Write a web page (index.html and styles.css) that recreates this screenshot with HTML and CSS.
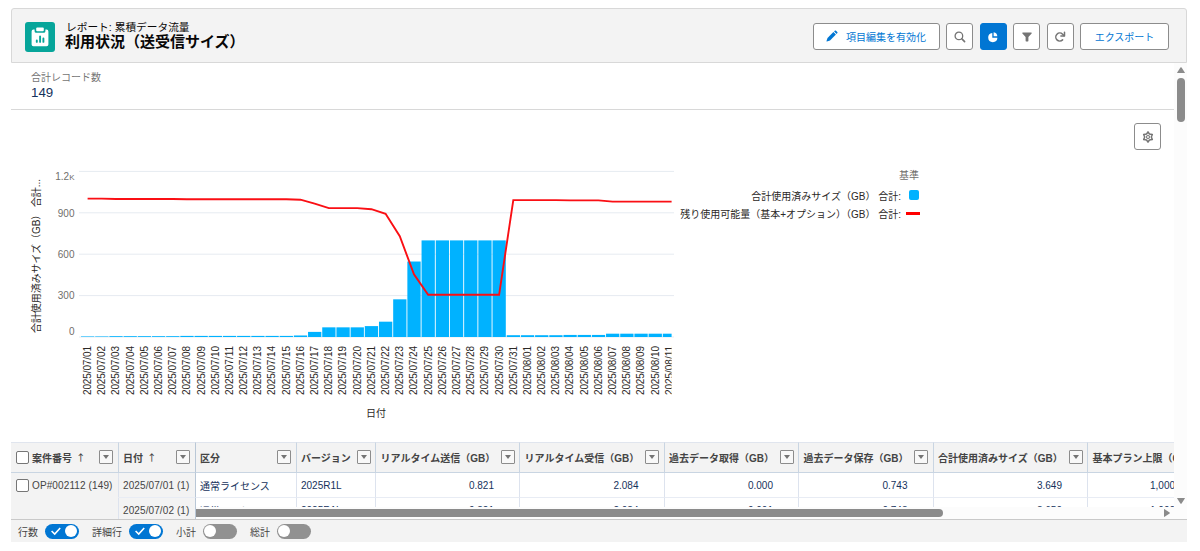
FILE: index.html
```html
<!DOCTYPE html>
<html lang="ja">
<head>
    <meta charset="UTF-8">
    <meta name="viewport" content="width=device-width, initial-scale=1.0">
    <title>利用状況（送受信サイズ）</title>
    <link rel="stylesheet" href="styles.css">
</head>
<body>
    <div class="report">
        <header class="report-header">
            <div class="report-icon">
                <svg width="30" height="30" viewBox="0 0 30 30">
                    <path fill="#fff" d="M8.4 7.6H9.6V9.2Q9.6 10.8 11.2 10.8H18.8Q20.4 10.8 20.4 9.2V7.6H21.6Q23.4 7.6 23.4 9.4V22.4Q23.4 24.2 21.6 24.2H8.4Q6.6 24.2 6.6 22.4V9.4Q6.6 7.6 8.4 7.6Z"/>
                    <path fill="#fff" d="M12.2 5.6H17.8Q18.8 5.6 18.8 6.6V8.2Q18.8 9.2 17.8 9.2H12.2Q11.2 9.2 11.2 8.2V6.6Q11.2 5.6 12.2 5.6Z"/>
                    <path stroke="#06a59a" stroke-width="1.9" stroke-linecap="round" d="M11.8 18.4V19.9M15.1 14.4V19.9M18.4 16.4V19.9"/>
                </svg>
            </div>
            <div class="report-title">
                <p>レポート: 累積データ流量</p>
                <h1>利用状況（送受信サイズ）</h1>
            </div>
            <div class="actions">
                <button class="btn btn-edit">
                    <svg width="12" height="12" viewBox="0 0 12 12" fill="#0176d3">
                        <path d="M1.5 8L7.4 2.1L9.9 4.6L4 10.5L.9 11.4Q.4 11.5.5 11Z"/>
                        <path d="M8.1 1.4L9 .6Q9.5.2 10 .7L11.3 2Q11.8 2.5 11.4 3L10.6 3.9Z"/>
                    </svg>
                    項目編集を有効化
                </button>
                <button class="btn btn-icon">
                    <svg width="12" height="12" viewBox="0 0 12 12" fill="none" stroke="#747474">
                        <circle cx="4.9" cy="4.9" r="3.8" stroke-width="1.3"/>
                        <path stroke-width="1.6" stroke-linecap="round" d="M7.9 7.9L10.6 10.6"/>
                    </svg>
                </button>
                <button class="btn btn-icon active">
                    <svg width="12" height="12" viewBox="0 0 12 12" fill="#fff">
                        <path d="M5.3 2V6.8H10.4A4.6 4.6 0 1 1 5.3 2Z"/>
                        <path d="M6.6 1.3A4.2 4.2 0 0 1 10.3 5.3H6.6Z"/>
                    </svg>
                </button>
                <button class="btn btn-icon">
                    <svg width="12" height="12" viewBox="0 0 12 12" fill="#747474">
                        <path d="M1.7 1.4H10.3Q11.2 1.6 10.6 2.5L7.4 6V9.8Q7.4 10.4 6.8 10.4H5.2Q4.6 10.4 4.6 9.8V6L1.4 2.5Q.8 1.6 1.7 1.4Z"/>
                    </svg>
                </button>
                <button class="btn btn-icon">
                    <svg width="12" height="12" viewBox="0 0 12 12" fill="none" stroke="#747474">
                        <path stroke-width="1.5" stroke-linecap="round" d="M8.6 8.9A4 4 0 1 1 8.6 3.2L10 4.6"/>
                        <path stroke-width="1.5" stroke-linecap="round" stroke-linejoin="round" d="M10.5 1.3V4.9H6.9"/>
                    </svg>
                </button>
                <button class="btn btn-export">エクスポート</button>
            </div>
        </header>

        <main class="report-body">
            <div class="content">
                <section class="summary">
                    <p class="summary-label">合計レコード数</p>
                    <p class="summary-value">149</p>
                </section>

                <section class="chart-area">
                    <svg id="chart" class="chart" width="670" height="332" viewBox="11 110 670 332">
                        <defs>
                            <clipPath id="plot-clip">
                                <rect x="80" y="165" width="591.6" height="240"/>
                            </clipPath>
                        </defs>
                        <g id="grid"></g>
                        <g clip-path="url(#plot-clip)">
                            <g id="bars"></g>
                            <polyline id="line" class="line"/>
                            <g id="dates"></g>
                        </g>
                        <text class="axis-title" transform="translate(40 333) rotate(-90)" textLength="154">合計使用済みサイズ（GB） 合計...</text>
                        <text class="axis-title" x="366" y="416.5">日付</text>
                    </svg>
                    <div class="legend">
                        <p class="legend-title">基準</p>
                        <p>合計使用済みサイズ（GB） 合計:<span class="key"><i class="key-bar"></i></span></p>
                        <p>残り使用可能量（基本+オプション）（GB） 合計:<span class="key"><i class="key-line"></i></span></p>
                    </div>
                    <button class="btn btn-icon btn-gear">
                        <svg width="12" height="12" viewBox="0 0 12 12" fill="none" stroke="#747474">
                            <path stroke-width="1.5" stroke-linejoin="round" d="M6 .9L7.4 3L10.3 3.4L9.3 6L10.3 8.6L7.4 9L6 11.1L4.6 9L1.7 8.6L2.7 6L1.7 3.4L4.6 3Z"/>
                            <circle cx="6" cy="6" r="1.5" stroke-width="1.1"/>
                        </svg>
                    </button>
                </section>

                <section class="table-area">
                    <div class="row head">
                        <div class="cell frozen"><span class="check"></span>案件番号<span class="sort">↑</span><span class="menu"></span></div>
                        <div class="cell frozen edge">日付<span class="sort">↑</span><span class="menu"></span></div>
                        <div class="cell">区分<span class="menu"></span></div>
                        <div class="cell">バージョン<span class="menu"></span></div>
                        <div class="cell">リアルタイム送信（GB）<span class="menu"></span></div>
                        <div class="cell">リアルタイム受信（GB）<span class="menu"></span></div>
                        <div class="cell">過去データ取得（GB）<span class="menu"></span></div>
                        <div class="cell">過去データ保存（GB）<span class="menu"></span></div>
                        <div class="cell">合計使用済みサイズ（GB）<span class="menu"></span></div>
                        <div class="cell">基本プラン上限（GB）<span class="menu"></span></div>
                    </div>
                    <div class="row">
                        <div class="cell frozen group"><span class="check"></span>OP#002112 (149)</div>
                        <div class="cell frozen edge date">2025/07/01 (1)</div>
                        <div class="cell">通常ライセンス</div>
                        <div class="cell">2025R1L</div>
                        <div class="cell num">0.821</div>
                        <div class="cell num">2.084</div>
                        <div class="cell num">0.000</div>
                        <div class="cell num">0.743</div>
                        <div class="cell num">3.649</div>
                        <div class="cell num">1,000.000</div>
                    </div>
                    <div class="row last">
                        <div class="cell frozen group"></div>
                        <div class="cell frozen edge date">2025/07/02 (1)</div>
                        <div class="scroll-pane">
                            <div class="cell">通常ライセンス</div>
                            <div class="cell">2025R1L</div>
                            <div class="cell num">0.821</div>
                            <div class="cell num">2.084</div>
                            <div class="cell num">0.001</div>
                            <div class="cell num">0.743</div>
                            <div class="cell num">3.650</div>
                            <div class="cell num">1,000.000</div>
                        </div>
                        <div class="hscroll">
                            <div class="hthumb"></div>
                            <svg width="6" height="8" viewBox="0 0 6 8"><path fill="#8b8b8b" d="M0 .3Q0-.2.6.2L5.6 3.4Q6.2 4 5.6 4.6L.6 7.8Q0 8.2 0 7.6Z"/></svg>
                        </div>
                    </div>
                </section>
            </div>
            <div class="vscroll">
                <svg width="8" height="6" viewBox="0 0 8 6"><path fill="#8b8b8b" d="M.4 6Q-.2 6 .2 5.4L3.4.5Q4 0 4.6.5L7.8 5.4Q8.2 6 7.6 6Z"/></svg>
                <div class="vthumb"></div>
                <svg class="down" width="8" height="6" viewBox="0 0 8 6"><path fill="#8b8b8b" d="M.4 0Q-.2 0 .2.6L3.4 5.5Q4 6 4.6 5.5L7.8.6Q8.2 0 7.6 0Z"/></svg>
            </div>
        </main>

        <footer class="report-footer">
            <div class="option">行数<span class="toggle on"><svg width="12" height="10" viewBox="0 0 12 10"><path d="M1.6 5L4.7 8L10.2 2"/></svg><i></i></span></div>
            <div class="option">詳細行<span class="toggle on"><svg width="12" height="10" viewBox="0 0 12 10"><path d="M1.6 5L4.7 8L10.2 2"/></svg><i></i></span></div>
            <div class="option">小計<span class="toggle"><i></i></span></div>
            <div class="option">総計<span class="toggle"><i></i></span></div>
        </footer>
    </div>

    <script>
        const NS = 'http://www.w3.org/2000/svg';

        // 合計使用済みサイズ（GB）: 2025/07/01 から
        const used = [4, 4, 6, 6, 6, 6, 6, 8, 8, 8, 8, 8, 8, 8, 8, 11, 37, 70, 70, 70, 79, 111, 273, 547,
            700, 700, 700, 700, 700, 700, 13, 13, 13, 13, 15, 15, 15, 24, 24, 24, 24, 24];
        // 残り使用可能量（GB）
        const left = [1003, 1003, 1000, 1000, 1000, 1000, 1000, 998, 998, 998, 998, 998, 998, 998, 998, 995, 967, 934, 934, 934, 926, 893, 730, 455,
            306, 306, 306, 306, 306, 306, 992, 992, 992, 992, 990, 990, 990, 981, 981, 981, 981, 981];

        const baseY = 337;
        const scale = 0.138;
        const startX = 81;
        const step = 14.19;

        function add(parent, name, attrs, text) {
            const el = document.createElementNS(NS, name);
            for (const key in attrs) {
                el.setAttribute(key, attrs[key]);
            }
            if (text) {
                el.textContent = text;
            }
            document.getElementById(parent).appendChild(el);
            return el;
        }

        // 目盛り
        const ticks = [[0, 335], [300, 299], [600, 257.5], [900, 216.5], [1200, 179.5]];
        ticks.forEach(([value, y]) => {
            const lineY = baseY - value * scale;
            add('grid', 'line', { class: 'grid-line', x1: 79, x2: 674, y1: lineY, y2: lineY });
            const label = add('grid', 'text', { class: 'tick', x: 74.5, y: y }, value === 1200 ? '1.2' : String(value));
            if (value === 1200) {
                const unit = document.createElementNS(NS, 'tspan');
                unit.setAttribute('class', 'unit');
                unit.textContent = 'K';
                label.appendChild(unit);
            }
        });

        // 棒と日付
        const points = [];
        used.forEach((value, i) => {
            const x = startX + i * step;
            const date = new Date(Date.UTC(2025, 6, 1 + i)).toISOString().slice(0, 10).replace(/-/g, '/');
            add('bars', 'rect', { class: 'bar', x: x, y: baseY - value * scale, width: step - 0.9, height: value * scale });
            add('dates', 'text', { class: 'date-label', transform: `translate(${x + 10} 395) rotate(-90)`, textLength: 49 }, date);
            points.push(`${x + 6.6},${baseY - left[i] * scale}`);
        });
        // 線は枠の右端まで伸ばす
        points.push(`674,${baseY - left[left.length - 1] * scale}`);
        document.getElementById('line').setAttribute('points', points.join(' '));
    </script>
</body>
</html>
```
FILE: styles.css
```css
* {
    box-sizing: border-box;
    margin: 0;
    padding: 0;
}

body {
    background: #fff;
    color: #3e3e3c;
    font-family: 'Liberation Sans', 'Noto Sans CJK JP', sans-serif;
    font-size: 10px;
    overflow: hidden;
}

.report {
    width: 1176px;
    height: 534px;
    margin: 8px 0 0 11px;
    display: flex;
    flex-direction: column;
}

/* --- Header --- */
.report-header {
    height: 55px;
    flex: none;
    display: flex;
    align-items: center;
    padding: 2px 17px 0 13px;
    background: #f3f3f3;
    border: 1px solid #d8d8d8;
    border-radius: 3px 3px 0 0;
}

.report-icon {
    width: 30px;
    height: 30px;
    border-radius: 3px;
    background: #06a59a;
}

.report-title {
    margin-left: 10px;
    padding-bottom: 4px;
    color: #080707;
}

.report-title p {
    font-size: 10.7px;
    line-height: 14px;
    padding-left: 1px;
}

.report-title h1 {
    font-size: 15px;
    line-height: 15px;
    font-weight: 700;
}

.actions {
    margin-left: auto;
    display: flex;
    gap: 6.5px;
}

.btn {
    height: 27px;
    display: flex;
    align-items: center;
    justify-content: center;
    background: #fff;
    border: 1px solid #8c8c8c;
    border-radius: 3px;
    color: #0176d3;
    font: inherit;
    cursor: pointer;
}

.btn-edit {
    width: 127px;
    gap: 8px;
    padding-bottom: 1px;
}

.btn-icon {
    width: 27px;
}

.btn-icon.active {
    background: #0176d3;
    border-color: #0176d3;
}

.btn-export {
    width: 89px;
    padding-bottom: 1px;
}

/* --- Body --- */
.report-body {
    flex: 1;
    min-height: 0;
    display: flex;
}

.content {
    width: 1163px;
    overflow: hidden;
}

.summary {
    height: 47px;
    padding: 8px 0 0 20px;
    border-bottom: 1px solid #d8d8d8;
}

.summary-label {
    line-height: 14px;
    color: #747474;
}

.summary-value {
    font-size: 13.3px;
    line-height: 16px;
    color: #16325c;
}

.chart-area {
    height: 332px;
    display: flex;
    align-items: flex-start;
}

.chart {
    flex: none;
    display: block;
    margin-right: -14px;
}

.grid-line {
    stroke: #e6ebf1;
    stroke-width: 1;
}

.tick {
    fill: #706e6b;
    font-size: 10px;
    text-anchor: end;
}

.unit {
    font-size: 8px;
}

.bar {
    fill: #00b2ff;
}

.line {
    fill: none;
    stroke: #fa0f14;
    stroke-width: 1.9;
}

.date-label {
    fill: #2b2826;
    font-size: 10px;
}

.axis-title {
    fill: #2b2826;
    font-size: 10px;
}

.legend {
    width: 253px;
    flex: none;
    padding-top: 55px;
    text-align: right;
    color: #2b2826;
}

.legend p {
    display: flex;
    justify-content: flex-end;
    align-items: center;
    height: 18.5px;
    white-space: pre;
}

.legend .legend-title {
    height: 21px;
    padding-right: 1px;
    padding-bottom: 2px;
    color: #706e6b;
}

.key {
    width: 19px;
    display: flex;
    justify-content: flex-end;
}

.key-bar {
    width: 10px;
    height: 10px;
    margin-right: 1px;
    border-radius: 2px;
    background: #00b2ff;
}

.key-line {
    width: 14px;
    height: 3px;
    background: #f00;
}

.btn-gear {
    margin: 13px 13px 0 auto;
}

/* --- Table --- */
.table-area {
    height: 77px;
    overflow: hidden;
}

.row,
.scroll-pane {
    display: grid;
    grid-template-columns: 107.5px 77px 101px 79.5px 144px 144.5px 134.5px 134.5px 154.5px 132.5px;
    white-space: nowrap;
}

.row {
    height: 25px;
}

.row.head {
    height: 31px;
    font-weight: 700;
}

.cell {
    display: flex;
    align-items: center;
    padding: 0 0 0 4.5px;
    border-right: 1px solid #dde3ee;
    border-bottom: 1px solid #e8ecf4;
    color: #16325c;
}

.head .cell {
    padding-right: 4.5px;
    padding-bottom: 1px;
    background: #f3f3f3;
    color: #444;
    border-top: 1px solid #e0e5ee;
    border-right-color: #c9d5e2;
    border-bottom: 1.5px solid #c9d5e2;
}

.frozen {
    background: #f3f3f3;
    color: #444;
}

.cell.edge {
    border-right: 1.5px solid #b9c7d6;
}

.group {
    border-bottom-color: #f3f3f3;
    letter-spacing: 0.12px;
}

.date {
    letter-spacing: 0.1px;
}

.cell.num {
    justify-content: flex-end;
    padding-right: 25px;
}

.check {
    width: 13px;
    height: 13px;
    flex: none;
    margin-right: 3.5px;
    background: #fff;
    border: 1px solid #767676;
    border-radius: 2px;
}

.sort {
    margin-left: 4px;
    font-family: 'Noto Sans CJK JP', sans-serif;
    font-size: 9.5px;
    font-weight: 500;
}

.menu {
    width: 14px;
    height: 14px;
    flex: none;
    margin-left: auto;
    display: flex;
    align-items: center;
    justify-content: center;
    background: #f8f8f8;
    border: 1px solid #8c8c8c;
    border-radius: 1px;
}

.menu::before {
    content: '';
    border: 3.5px solid transparent;
    border-top: 4.5px solid #747474;
    border-bottom: 0;
}

.row.last {
    height: 21px;
    grid-template-columns: 107.5px 77px 978.5px;
    grid-template-rows: 9px 12px;
}

.last > .frozen {
    grid-row: 1 / 3;
    padding-top: 3px;
    border-bottom: 0;
}

.scroll-pane {
    grid-column: 3;
    grid-template-columns: 101px 79.5px 144px 144.5px 134.5px 134.5px 154.5px 132.5px;
    grid-template-rows: 26px;
    overflow: hidden;
}

.hscroll {
    grid-column: 3;
    display: flex;
    align-items: center;
    padding-right: 4px;
    justify-content: space-between;
    background: #fcfcfc;
}

.hthumb {
    width: 747.5px;
    height: 8px;
    background: #8b8b8b;
    border-radius: 0 4px 4px 0;
}

.vscroll {
    width: 13px;
    display: flex;
    flex-direction: column;
    align-items: center;
    padding: 4px 0 15px;
    background: #fcfcfc;
}

.vthumb {
    width: 8px;
    height: 44px;
    margin-top: 5px;
    background: #8b8b8b;
    border-radius: 4px;
}

.down {
    margin-top: auto;
}

/* --- Footer --- */
.report-footer {
    height: 23px;
    flex: none;
    display: flex;
    align-items: center;
    gap: 13.5px;
    padding: 0 0 0 7px;
    background: #f3f3f3;
    border-top: 1px solid #c9c9c9;
}

.option {
    display: flex;
    align-items: center;
    gap: 6.5px;
    color: #444;
}

.toggle {
    width: 34px;
    height: 15px;
    display: flex;
    align-items: center;
    padding: 0 1.5px;
    border-radius: 8px;
    background: #919191;
}

.toggle i {
    width: 12px;
    height: 12px;
    border-radius: 50%;
    background: #fff;
}

.toggle.on {
    justify-content: space-between;
    padding-left: 5px;
    background: #0176d3;
}

.toggle path {
    fill: none;
    stroke: #fff;
    stroke-width: 1.6;
}
```
